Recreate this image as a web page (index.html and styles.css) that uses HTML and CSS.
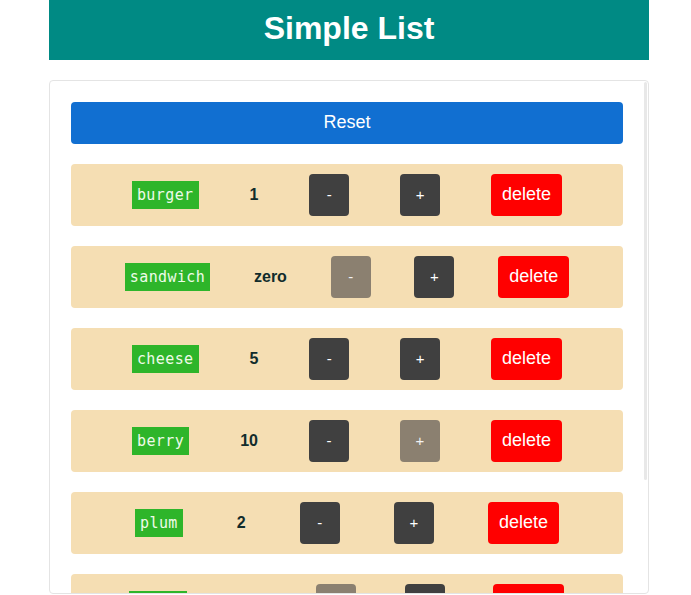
FILE: index.html
```html
<!DOCTYPE html>
<html lang="en">
<head>
<meta charset="utf-8">
<title>Simple List</title>
<link rel="stylesheet" href="styles.css">
</head>
<body>
<div class="app">
  <header class="header"><h1 class="title">Simple List</h1></header>
  <main class="card">
    <div class="scroll-thumb"></div>
    <button class="reset">Reset</button>
    <div class="row">
      <span class="tag">burger</span>
      <span class="count">1</span>
      <button class="step">-</button>
      <button class="step">+</button>
      <button class="delete">delete</button>
    </div>
    <div class="row">
      <span class="tag">sandwich</span>
      <span class="count">zero</span>
      <button class="step" disabled>-</button>
      <button class="step">+</button>
      <button class="delete">delete</button>
    </div>
    <div class="row">
      <span class="tag">cheese</span>
      <span class="count">5</span>
      <button class="step">-</button>
      <button class="step">+</button>
      <button class="delete">delete</button>
    </div>
    <div class="row">
      <span class="tag">berry</span>
      <span class="count">10</span>
      <button class="step">-</button>
      <button class="step" disabled>+</button>
      <button class="delete">delete</button>
    </div>
    <div class="row">
      <span class="tag">plum</span>
      <span class="count">2</span>
      <button class="step">-</button>
      <button class="step">+</button>
      <button class="delete">delete</button>
    </div>
    <div class="row">
      <span class="tag">apple</span>
      <span class="count">zero</span>
      <button class="step" disabled>-</button>
      <button class="step">+</button>
      <button class="delete">delete</button>
    </div>
    <div class="row">
      <span class="tag">grape</span>
      <span class="count">3</span>
      <button class="step">-</button>
      <button class="step">+</button>
      <button class="delete">delete</button>
    </div>
  </main>
</div>
</body>
</html>
```
FILE: styles.css
```css
html, body {
  margin: 0;
  padding: 0;
  background: #ffffff;
  font-family: "Liberation Sans", Arial, sans-serif;
}

.app {
  width: 600px;
  margin-left: 49px;
}

.header {
  height: 60px;
  background: #008a84;
  display: flex;
  align-items: center;
  justify-content: center;
}

.title {
  margin: 0;
  color: #ffffff;
  font-size: 32px;
  font-weight: bold;
  line-height: 1;
  padding-bottom: 4px;
}

.card {
  position: relative;
  margin-top: 20px;
  border: 1px solid #e4e4e4;
  border-radius: 4px;
  padding: 21px 25px 21px 21px;
  box-sizing: border-box;
  height: 514px;
  overflow: hidden;
  display: flex;
  flex-direction: column;
  gap: 20px;
}

.scroll-thumb {
  position: absolute;
  top: 1px;
  right: 1px;
  width: 3px;
  height: 398px;
  background: #e8e8e8;
  border-radius: 2px;
}

.reset {
  flex: none;
  height: 42px;
  border: none;
  border-radius: 4px;
  background: #116fd1;
  color: #ffffff;
  font-family: "Liberation Sans", Arial, sans-serif;
  font-size: 18px;
  padding: 0 0 2px;
}

.row {
  flex: none;
  height: 62px;
  box-sizing: border-box;
  padding: 10px;
  background: #f5deb3;
  border-radius: 4px;
  display: flex;
  align-items: center;
  justify-content: space-evenly;
}

.tag {
  background: #2eb52a;
  color: #eefbe9;
  font-family: "DejaVu Sans Mono", monospace;
  font-size: 15px;
  letter-spacing: 0.4px;
  line-height: 18px;
  padding: 5px 5px 5px 5px;
}

.count {
  font-size: 16px;
  font-weight: bold;
  color: #112c2c;
}

.step {
  width: 40px;
  height: 42px;
  border: none;
  border-radius: 4px;
  background: #404040;
  color: #ffffff;
  font-family: "Liberation Sans", Arial, sans-serif;
  font-size: 15px;
  padding: 0 0 2px;
}

.step:disabled {
  background: #8b8070;
  color: #f2f2f2;
}

.delete {
  height: 42px;
  border: none;
  border-radius: 4px;
  background: #ff0000;
  color: #ffffff;
  font-family: "Liberation Sans", Arial, sans-serif;
  font-size: 18px;
  padding: 0 11px 2px;
}
```
